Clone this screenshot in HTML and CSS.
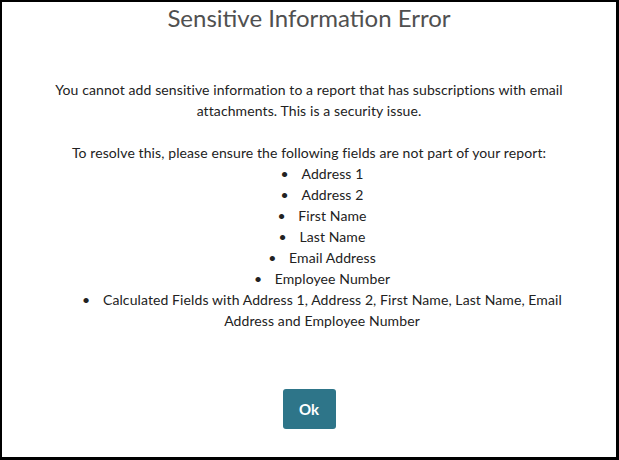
FILE: index.html
```html
<!DOCTYPE html>
<html>
<head>
<meta charset="utf-8">
<link rel="stylesheet" href="styles.css">
</head>
<body>
<div class="dialog">
  <h2 class="title">Sensitive Information Error</h2>
  <div class="content">
    <p class="para">You cannot add sensitive information to a report that has subscriptions with email attachments. This is a security issue.</p>
    <p class="para">To resolve this, please ensure the following fields are not part of your report:</p>
    <ul class="fields">
      <li>Address 1</li>
      <li>Address 2</li>
      <li>First Name</li>
      <li>Last Name</li>
      <li>Email Address</li>
      <li>Employee Number</li>
      <li>Calculated Fields with Address 1, Address 2, First Name, Last Name, Email Address and Employee Number</li>
    </ul>
  </div>
  <div class="footer">
    <button class="ok">Ok</button>
  </div>
</div>
</body>
</html>
```
FILE: styles.css
```css
html, body {
  margin: 0;
  padding: 0;
  background: #fff;
}
.dialog {
  box-sizing: border-box;
  width: 619px;
  height: 460px;
  border-style: solid;
  border-color: #000;
  border-width: 2px 3px 3px 2px;
  display: flex;
  flex-direction: column;
  font-family: "Lato", "Liberation Sans", sans-serif;
}
.title {
  margin: 1px 0 0;
  text-align: center;
  font-size: 24px;
  line-height: 30px;
  font-weight: 400;
  color: #505050;
}
.content {
  padding: 46px 48px 0;
  text-align: center;
  font-size: 14px;
  letter-spacing: 0.1px;
  line-height: 21px;
  color: #222;
}
.para {
  margin: 0 0 21px;
}
.para + .para {
  margin-bottom: 0;
}
.fields {
  margin: 0;
  padding: 0 0 0 26px;
  list-style-position: inside;
}
.fields li::marker {
  content: "\2022\2002\2009\00a0 ";
}
.footer {
  display: flex;
  justify-content: center;
  padding-top: 58px;
}
.ok {
  width: 53px;
  height: 40px;
  border: none;
  border-radius: 3px;
  background: #2e7589;
  color: #fff;
  font-family: "Lato", "Liberation Sans", sans-serif;
  font-weight: 700;
  font-size: 15px;
  padding: 0;
}
```
